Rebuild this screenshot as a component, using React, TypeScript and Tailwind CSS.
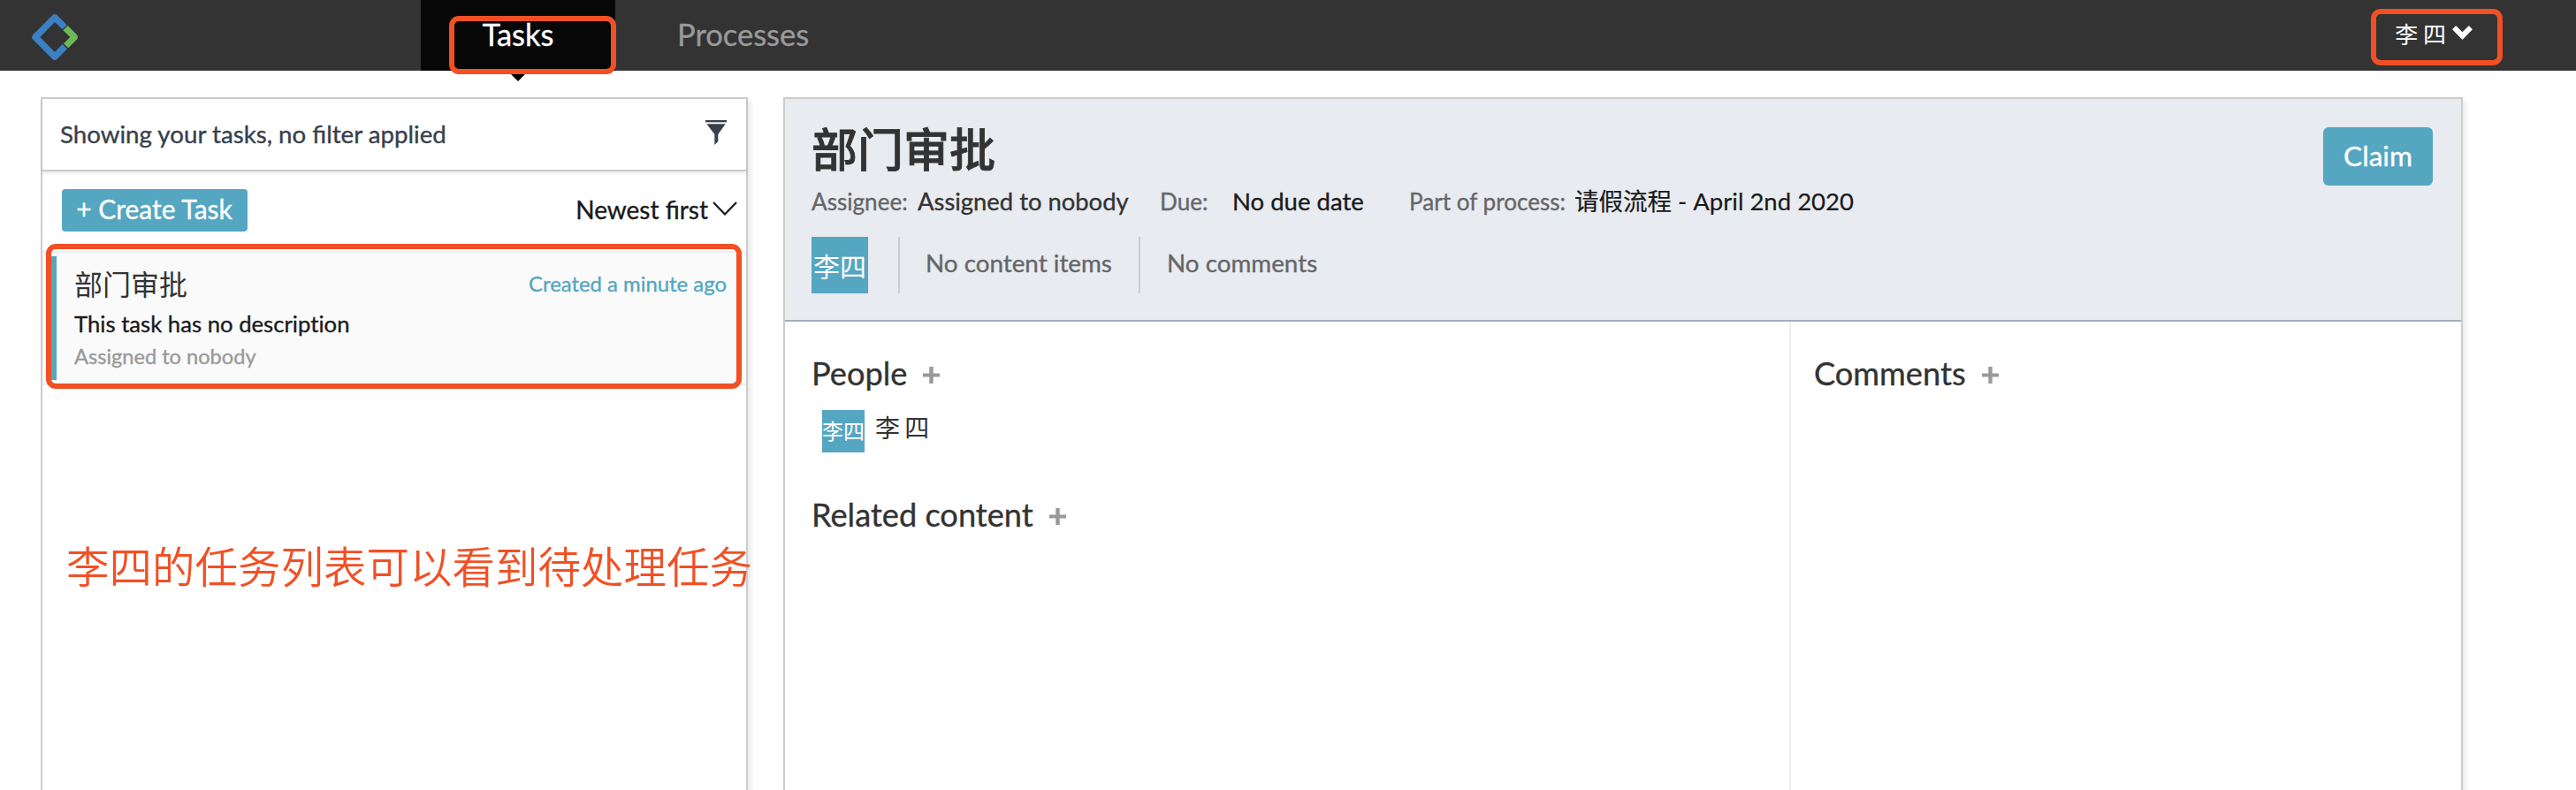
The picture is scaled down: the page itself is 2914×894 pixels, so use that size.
import type { ReactNode } from "react";

function Logo() {
  return (
    <svg className="ml-9 h-[52px] w-[52px]" viewBox="0 0 156 156">
      <path fill="#3a80c3" d="M72 1.500Q78-1.500 84 1.500L119 37L104 52L78 27L28 78L78 128L104 102L120 118L84 154.500Q78 157.500 72 154.500L2 84Q-1 78 2 72Z" />
      <path fill="#6cb956" d="M122 39L154 71Q158 78 154 85L124 115L108 100L130 78L106 55Z" />
    </svg>
  );
}

function FunnelIcon() {
  return (
    <svg className="mb-1 h-7 w-6" viewBox="0 0 72 84" fill="#37404b">
      <rect x="0" y="0" width="72" height="7" />
      <path d="M4 13H68L43 48V72L31 84V48Z" />
    </svg>
  );
}

function BoldChevron() {
  return (
    <svg className="ml-[7px] mt-[29px] h-4 w-[23px]" viewBox="0 0 68 48" fill="#fff" stroke="#fff" strokeWidth="4" strokeLinejoin="round">
      <path d="M2.500 13L12 3L34 25L56 3L65.500 13L34 45Z" />
    </svg>
  );
}

function ThinChevron() {
  return (
    <svg className="ml-[5px] mt-[34px] h-4 w-7" viewBox="0 0 28 16" fill="none" stroke="#1a1a1a" strokeWidth="2.2">
      <path d="M1 1L14 14.500L27 1" />
    </svg>
  );
}

function PlusIcon() {
  return (
    <svg className="h-[19px] w-[19px]" viewBox="0 0 19 19" fill="#999" stroke="none">
      <path d="M7.300 0H11.700V7.500H19V11.500H11.700V19H7.300V11.500H0V7.500H7.300Z" />
    </svg>
  );
}

function SectionTitle({ children }: { children: ReactNode }) {
  return (
    <div className="flex h-12 items-center gap-[18px] text-[36.2px] leading-[44px] text-[#333]">
      <h3 className="-mt-1">{children}</h3>
      <PlusIcon />
    </div>
  );
}

function TopBar() {
  return (
    <header className="flex h-20 bg-[#333]">
      <div className="flex w-[476px] items-center pt-1"><Logo /></div>
      <nav className="flex text-[34.5px] leading-[77px]">
        <a className="relative w-[220px] bg-[#070707] text-center text-[34.4px] text-white">
          Tasks
          <svg className="absolute left-[98px] top-20 h-3 w-6" viewBox="0 0 24 12"><path d="M0 0H24L12 12Z" /></svg>
        </a>
        <a className="ml-[70px] text-[#999]">Processes</a>
      </nav>
      <div className="ml-auto mr-[117px] flex text-[26px] leading-[78px] text-white [-webkit-text-stroke:0px]">
        <span className="[word-spacing:-1px]">李 四</span>
        <BoldChevron />
      </div>
    </header>
  );
}

function TaskList() {
  return (
    <section className="flex h-[820px] w-[800px] flex-col border-2 border-[#ccc] bg-white shadow-[4px_4px_4px_rgba(0,0,0,0.07)]">
      <div className="flex h-[82px] shrink-0 items-center justify-between border-b-2 border-[#ccc] pl-5 pr-[22px] text-[27.7px] text-[#37404b] shadow-[0_2px_4px_rgba(0,0,0,0.1)]">
        <span className="leading-[78px]">Showing your tasks, no filter applied</span>
        <FunnelIcon />
      </div>
      <div className="flex h-[90px] shrink-0 pl-[22px] pr-[10px]">
        <button className="mt-5 h-12 w-[210px] rounded bg-[#55a6c1] pb-[3px] pr-px text-center text-[30px] leading-[45px] text-white">+ Create Task</button>
        <div className="ml-auto flex text-[28px] leading-[86px] text-[#1a1a1a]">
          <span>Newest first</span>
          <ThinChevron />
        </div>
      </div>
      <article className="flex h-[152px] shrink-0 border-y-2 border-[#eee] bg-[#fafafa] py-1 pl-[10px] pr-[22px]">
        <div className="w-[6px] bg-[#55a6c1]" />
        <div className="flex flex-1 flex-col pl-5">
          <div className="mt-[10px] flex h-11 items-start justify-between">
            <h2 className="text-[32px] leading-[44px] text-[#333] [-webkit-text-stroke:0px]">部门审批</h2>
            <span className="text-[23.9px] leading-[41px] text-[#55a6c1]">Created a minute ago</span>
          </div>
          <p className="mt-[2px] h-10 text-[25.7px] leading-10 text-[#1a1a1a] [font-variant-ligatures:none]">This task has no description</p>
          <p className="text-[23.6px] leading-[34px] text-[#999]">Assigned to nobody</p>
        </div>
      </article>
    </section>
  );
}

function TaskHeader() {
  return (
    <div className="flex h-[252px] shrink-0 items-start justify-between border-b-2 border-[#a6adbc] bg-[#e8ebf0] pl-[30px] pr-8">
      <div>
        <h1 className="mb-px mt-[23px] h-[68px] text-[52px] font-medium leading-[68px] text-[#333] [-webkit-text-stroke:0.8px]">部门审批</h1>
        <div className="flex h-11 items-baseline text-[26.1px] leading-[47px] text-[#666]">
          <span className="w-[120px]">Assignee:</span>
          <span className="w-[274px] text-[27.4px] text-[#333]">Assigned to nobody</span>
          <span className="w-[82px]">Due:</span>
          <span className="w-[200px] text-[27.5px] text-[#1a1a1a]">No due date</span>
          <span className="w-[187px]">Part of process:</span>
          <span className="text-[27.5px] text-[#1a1a1a] [-webkit-text-stroke:0.2px]">请假流程 - April 2nd 2020</span>
        </div>
        <div className="mt-5 flex h-16 text-[27.8px] leading-[59px] text-[#666]">
          <div className="mr-[34px] w-16 bg-[#55a6c1] text-center text-[30px] leading-[66px] text-white [-webkit-text-stroke:0px]">李四</div>
          <div className="w-[272px] border-l-2 border-[#ccc] pl-[29px]">No content items</div>
          <div className="border-l-2 border-[#ccc] pl-[30px]">No comments</div>
        </div>
      </div>
      <button className="mt-8 h-[66px] w-[124px] rounded-md bg-[#55a6c1] pb-[2px] text-[31.6px] leading-[64px] text-white">Claim</button>
    </div>
  );
}

function TaskDetail() {
  return (
    <section className="flex h-[820px] w-[1900px] flex-col border-2 border-[#ccc] bg-white shadow-[4px_4px_4px_rgba(0,0,0,0.07)]">
      <TaskHeader />
      <div className="flex flex-1">
        <div className="w-[1136px] pl-[30px] pt-9">
          <SectionTitle>People</SectionTitle>
          <div className="ml-3 mt-4 flex h-12 text-[28px] text-[#333] [-webkit-text-stroke:0px]">
            <div className="mr-3 w-12 bg-[#55a6c1] text-center text-[24px] leading-[47px] text-white">李四</div>
            <span className="leading-10 [word-spacing:-2px]">李 四</span>
          </div>
          <div className="mt-12"><SectionTitle>Related content</SectionTitle></div>
        </div>
        <div className="flex-1 border-l-2 border-[#eee] pl-[26px] pt-9">
          <SectionTitle>Comments</SectionTitle>
        </div>
      </div>
    </section>
  );
}

export default function App() {
  return (
    <div className="relative h-[894px] w-[2914px] overflow-hidden bg-white font-['Lato','Noto_Sans_CJK_SC',sans-serif] [-webkit-text-stroke:0.35px]">
      <TopBar />
      <main className="flex gap-10 pl-[46px] pt-[30px]">
        <TaskList />
        <TaskDetail />
      </main>
      <div className="absolute left-[508px] top-[18px] h-[66px] w-[189px] rounded-[11px] border-[6px] border-[#f15025]" />
      <div className="absolute left-[2682px] top-[10px] h-16 w-[149px] rounded-[11px] border-[6px] border-[#f15025]" />
      <div className="absolute left-[52px] top-[276px] h-[164px] w-[787px] rounded-[11px] border-[6px] border-[#f15025]" />
      <p className="absolute left-[75px] top-[606px] whitespace-nowrap text-[48.5px] font-[350] leading-[70px] text-[#f15025] [-webkit-text-stroke:0px]">李四的任务列表可以看到待处理任务</p>
    </div>
  );
}
